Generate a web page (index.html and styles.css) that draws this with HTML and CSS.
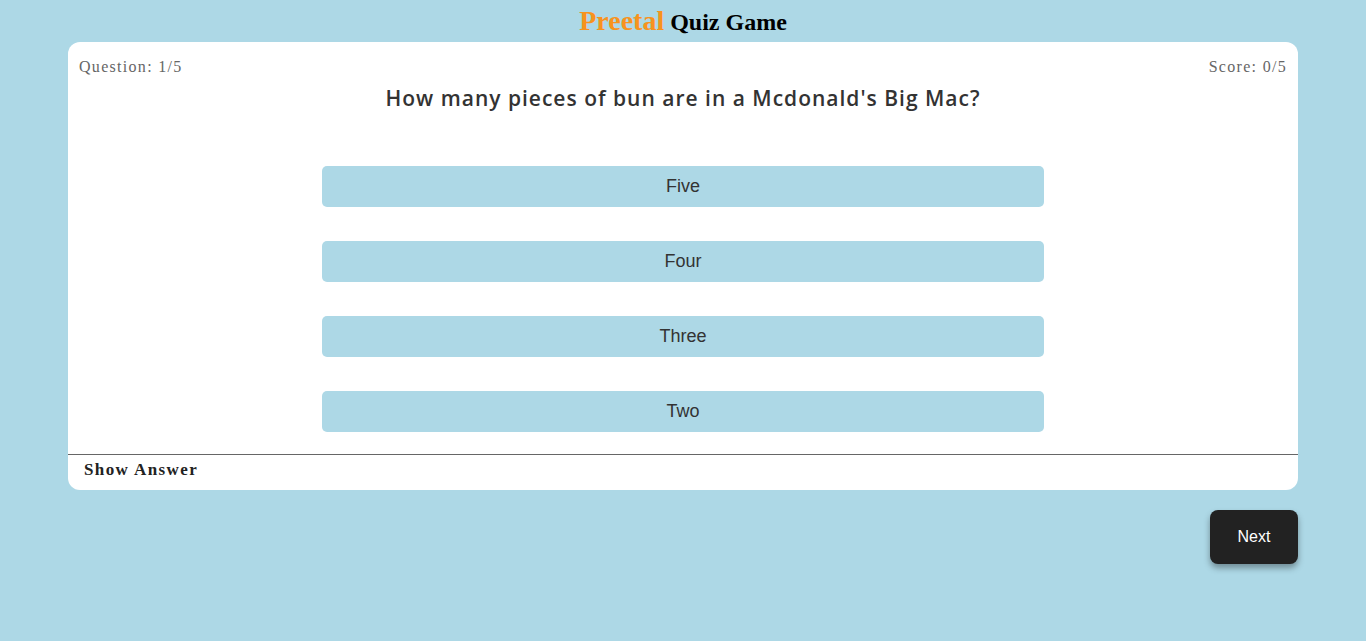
FILE: index.html
```html
<!DOCTYPE html>
<html>
<head>
<meta charset="utf-8">
<link rel="stylesheet" href="styles.css">
</head>
<body>
<h1 class="title"><span class="brand">Preetal</span> Quiz Game</h1>
<div class="card">
  <div class="top-row">
    <span class="meta">Question: 1/5</span>
    <span class="meta">Score: 0/5</span>
  </div>
  <h2 class="question">How many pieces of bun are in a Mcdonald's Big Mac?</h2>
  <div class="options">
    <button class="option">Five</button>
    <button class="option">Four</button>
    <button class="option">Three</button>
    <button class="option">Two</button>
  </div>
  <div class="footer">
    <span class="show">Show Answer</span>
  </div>
</div>
<div class="actions">
  <button class="next">Next</button>
</div>
</body>
</html>
```
FILE: styles.css
```css
html, body {
  margin: 0;
  padding: 0;
}
body {
  background: #add8e6;
  font-family: "Liberation Serif", serif;
  min-height: 641px;
}
.title {
  margin: 0;
  padding-top: 4px;
  height: 38px;
  text-align: center;
  font-size: 24px;
  line-height: 34px;
  font-weight: bold;
  color: #000;
}
.brand {
  color: #f7931e;
  font-size: 28px;
}
.card {
  width: 1230px;
  margin: 0 auto;
  background: #fff;
  border-radius: 12px;
  display: flex;
  flex-direction: column;
  overflow: hidden;
}
.top-row {
  display: flex;
  justify-content: space-between;
  padding: 15px 11px 0 11px;
  height: 20px;
}
.meta {
  font-size: 16px;
  color: #666;
  letter-spacing: 1.3px;
  line-height: 20px;
}
.question {
  margin: 8px 0 0 0;
  text-align: center;
  font-family: "Open Sans", sans-serif;
  font-weight: 600;
  font-size: 21px;
  letter-spacing: 1px;
  color: #333;
  line-height: 26px;
}
.options {
  display: flex;
  flex-direction: column;
  align-items: center;
  gap: 34px;
  padding-top: 55px;
  padding-bottom: 22px;
}
.option {
  width: 722px;
  height: 41px;
  border: none;
  border-radius: 5px;
  background: #add8e6;
  font-family: "Liberation Sans", Arial, sans-serif;
  font-size: 18px;
  color: #333;
  padding: 0;
}
.footer {
  border-top: 1px solid #666;
  padding: 5px 16px 0 16px;
  height: 30px;
}
.show {
  font-weight: bold;
  font-size: 17px;
  letter-spacing: 1.4px;
  color: #222;
  line-height: 20px;
}
.actions {
  width: 1230px;
  margin: 20px auto 0 auto;
  display: flex;
  justify-content: flex-end;
}
.next {
  width: 88px;
  height: 54px;
  background: #222;
  color: #fff;
  border: none;
  border-radius: 8px;
  font-family: "Liberation Sans", Arial, sans-serif;
  font-size: 16px;
  box-shadow: 0 4px 6px rgba(0,0,0,0.35);
}
```
